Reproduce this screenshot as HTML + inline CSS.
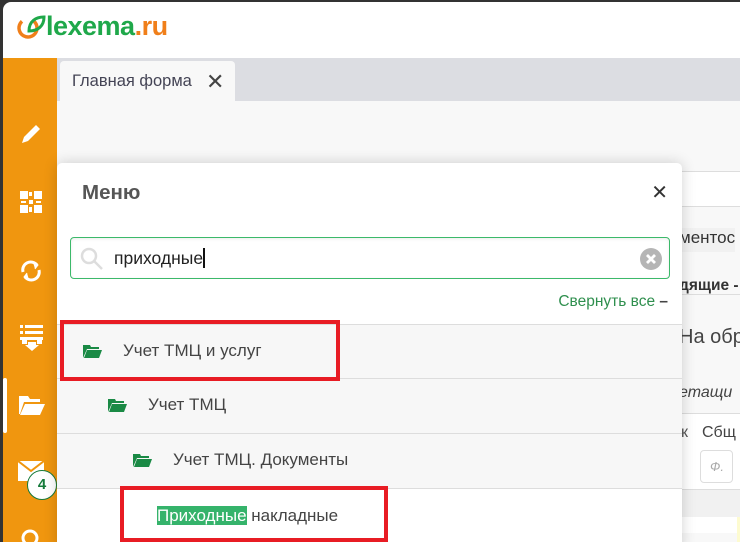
<!DOCTYPE html>
<html><head><meta charset="utf-8"><style>
*{margin:0;padding:0;box-sizing:border-box}
body{width:740px;height:542px;overflow:hidden;font-family:"Liberation Sans","DejaVu Sans",sans-serif;background:#333;position:relative}
#app{position:absolute;left:3px;top:2px;right:0;bottom:0;background:#fff;border-top-left-radius:8px;overflow:hidden}
.logo{position:absolute;left:13px;top:9px;font-size:27px;font-weight:bold;color:#1fa84a;letter-spacing:-0.5px}
.logo .ru{color:#f07f1a}
#side{position:absolute;left:0;top:56px;width:54px;bottom:0;background:#f0960f}
#tabs{position:absolute;left:54px;top:56px;right:0;height:43px;background:#dcdde2}
.tab{position:absolute;left:3px;top:3px;width:175px;height:40px;background:#f8f8f8;border-radius:4px 4px 0 0;font-size:16.5px;color:#445;padding:11px 0 0 12px}
.tab b{position:absolute;left:146px;top:8px;font-size:22px;color:#444}
#content{position:absolute;left:54px;top:99px;right:0;bottom:0;background:#f8f8f8}
.bg{position:absolute;font-size:17px;color:#333;white-space:nowrap}
#modal{position:absolute;left:54px;top:161px;width:625px;bottom:-10px;background:#fff;border-radius:5px;box-shadow:0 0 14px rgba(0,0,0,.18)}
.ttl{position:absolute;left:25px;top:18px;font-size:20.5px;color:#444;font-weight:bold;opacity:.9}
.cls{position:absolute;right:14px;top:17px;font-size:20px;font-weight:bold;color:#333}
.srch{position:absolute;left:13px;top:74px;width:600px;height:42px;border:1px solid #3cb96a;border-radius:4px;box-shadow:inset 0 1px 3px rgba(0,0,0,.08)}
.srch .t{position:absolute;left:43px;top:10px;font-size:17.5px;color:#222}
.cur{display:inline-block;width:2px;height:20px;background:#111;vertical-align:-4px}
.coll{position:absolute;right:14px;top:130px;font-size:15.5px;color:#2f8f4e}
.row{position:absolute;left:0;width:625px;height:55px;border-top:1px solid #ddd;background:#f7f7f7;font-size:17px;color:#444}
.row span{position:absolute;top:16px}
.fold{position:absolute;top:20px;width:19px;height:13px}
.red{position:absolute;border:4px solid #e81c24}
.hl{background:#35b36b;color:#fff}
</style></head><body>
<div id="app">
<div class="logo"><svg width="30" height="30" viewBox="0 0 30 30" style="vertical-align:-6px"><circle cx="12" cy="17" r="9" fill="none" stroke="#f07f1a" stroke-width="3.5" stroke-dasharray="45 12" transform="rotate(-60 12 17)"/><path d="M13 20 C13 10 20 6 28 6 C28 15 22 20 13 20Z" fill="none" stroke="#1fa84a" stroke-width="3"/></svg>lexema<span class="ru">.ru</span></div>
<div id="side">
<svg style="position:absolute;left:16px;top:64px" width="24" height="24" viewBox="0 0 24 24"><path d="M3 21 L5 15 L17 3 L21 7 L9 19Z" fill="#fff"/></svg>
<svg style="position:absolute;left:16px;top:132px" width="24" height="24" viewBox="0 0 24 24" fill="#fff"><rect x="1" y="1" width="8" height="8"/><rect x="15" y="1" width="8" height="8"/><rect x="1" y="15" width="8" height="8"/><rect x="15" y="15" width="8" height="8"/><rect x="10" y="10" width="4" height="4"/><rect x="10" y="2" width="3" height="4"/><rect x="2" y="11" width="5" height="2"/><rect x="17" y="11" width="5" height="2"/><rect x="10" y="17" width="3" height="5"/></svg>
<svg style="position:absolute;left:16px;top:200px" width="24" height="26" viewBox="0 0 24 26" fill="none" stroke="#fff" stroke-width="3"><path d="M4 14 A8 8 0 0 1 18 7"/><path d="M20 12 A8 8 0 0 1 6 19"/><path d="M14 4 L19 7 L16 11" fill="#fff" stroke-width="1"/><path d="M10 22 L5 19 L8 15" fill="#fff" stroke-width="1"/></svg>
<svg style="position:absolute;left:16px;top:266px" width="26" height="28" viewBox="0 0 26 28" fill="#fff"><rect x="1" y="1" width="3" height="3"/><rect x="6" y="1" width="18" height="3"/><rect x="1" y="7" width="3" height="3"/><rect x="6" y="7" width="18" height="3"/><rect x="1" y="13" width="23" height="3"/><path d="M3 16 L3 20 L8 20 L8 16Z"/><path d="M9 18 L17 18 L17 21 L20 21 L13 27 L6 21 L9 21Z"/><rect x="18" y="16" width="5" height="4"/></svg>
<div style="position:absolute;left:0;top:320px;width:4px;height:55px;background:#fff;border-radius:2px"></div>
<svg style="position:absolute;left:15px;top:335px" width="28" height="24" viewBox="0 0 28 24" fill="#fff"><path d="M1 3 L10 3 L12 6 L22 6 L22 9 L6 9 L2 21 L1 21Z"/><path d="M7 11 L27 11 L22 22 L2 22Z"/></svg>
<svg style="position:absolute;left:15px;top:403px" width="26" height="20" viewBox="0 0 26 20"><rect x="0" y="0" width="26" height="20" fill="#fff"/><path d="M0 0 L13 10 L26 0" fill="none" stroke="#f0960f" stroke-width="2"/></svg>
<div style="position:absolute;left:24px;top:412px;width:30px;height:30px;border-radius:50%;background:#fff;border:1.5px solid #157a3a;color:#157a3a;font-weight:bold;font-size:15px;text-align:center;line-height:27px">4</div>
<svg style="position:absolute;left:17px;top:470px" width="24" height="24" viewBox="0 0 24 24" fill="none" stroke="#fff" stroke-width="3"><circle cx="10" cy="10" r="7"/></svg>
</div>
<div id="tabs"><div class="tab">Главная форма<b>✕</b></div></div>
<div id="content">
<div style="position:absolute;left:569px;top:70px;right:0;height:36px;background:#fff;border:1px solid #ddd;border-right:none"></div>
<div class="bg" style="left:618px;top:127px;background:#f1f1f1;padding:0 0 4px 4px">ментос</div>
<div class="bg" style="left:622px;top:176px;font-weight:bold;font-size:15.5px">дящие -</div>
<div style="position:absolute;left:569px;top:193px;right:0;border-top:1px solid #ddd"></div>
<div class="bg" style="left:622px;top:225px;font-size:20px;color:#444">На обра</div>
<div class="bg" style="left:622px;top:283px;font-style:italic;font-size:16px;color:#444">етащи</div>
<div style="position:absolute;left:569px;top:312px;right:0;height:120px;background:#fff;border-top:1px solid #ddd"></div>
<div class="bg" style="left:624px;top:323px;font-size:16px;color:#555">к</div>
<div class="bg" style="left:645px;top:323px;font-size:16px;color:#444">Сбщ</div>
<div style="position:absolute;left:643px;top:349px;width:33px;height:33px;border:1px solid #ddd;border-radius:4px;color:#aaa;font-style:italic;font-size:13px;padding:8px 0 0 9px">Ф.</div>
<div style="position:absolute;left:569px;top:388px;right:0;height:28px;background:#f1f1f1;border-top:1px solid #ddd"></div>
<div style="position:absolute;left:680px;top:416px;right:0;height:30px;background:#fdfbd0"></div>
</div>
<div id="modal">
<div class="ttl">Меню</div>
<div class="cls">✕</div>
<div class="srch">
<svg style="position:absolute;left:9px;top:9px" width="24" height="24" viewBox="0 0 24 24" fill="none" stroke="#ddd" stroke-width="2.5"><circle cx="9" cy="9" r="7"/><path d="M14 14 L22 22"/></svg>
<div class="t">приходные<span class="cur"></span></div>
<svg style="position:absolute;right:6px;top:9px" width="24" height="24" viewBox="0 0 24 24"><circle cx="12" cy="12" r="11" fill="#b5b5b5"/><path d="M8 8 L16 16 M16 8 L8 16" stroke="#fff" stroke-width="2.8"/></svg>
</div>
<div class="coll">Свернуть все <b style="color:#444">–</b></div>
<div class="row" style="top:161px"><svg class="fold" style="left:26px" viewBox="0 0 19 13"><path d="M0 0 L7 0 L8 2 L16 2 L16 4 L4 4 L0 13Z M4 5 L19 5 L16 13 L1 13Z" fill="#1a8a45"/></svg><span style="left:66px">Учет ТМЦ и услуг</span></div>
<div class="row" style="top:215px"><svg class="fold" style="left:51px" viewBox="0 0 19 13"><path d="M0 0 L7 0 L8 2 L16 2 L16 4 L4 4 L0 13Z M4 5 L19 5 L16 13 L1 13Z" fill="#1a8a45"/></svg><span style="left:91px">Учет ТМЦ</span></div>
<div class="row" style="top:270px"><svg class="fold" style="left:76px" viewBox="0 0 19 13"><path d="M0 0 L7 0 L8 2 L16 2 L16 4 L4 4 L0 13Z M4 5 L19 5 L16 13 L1 13Z" fill="#1a8a45"/></svg><span style="left:116px">Учет ТМЦ. Документы</span></div>
<div class="row" style="top:325px;background:#fff;height:70px"><span style="left:100px;top:17px"><span class="hl" style="position:static">Приходные</span> накладные</span></div>
</div>
<div class="red" style="left:57px;top:318px;width:280px;height:61px"></div>
<div class="red" style="left:117px;top:484px;width:268px;height:56px"></div>
</div>
</body></html>
